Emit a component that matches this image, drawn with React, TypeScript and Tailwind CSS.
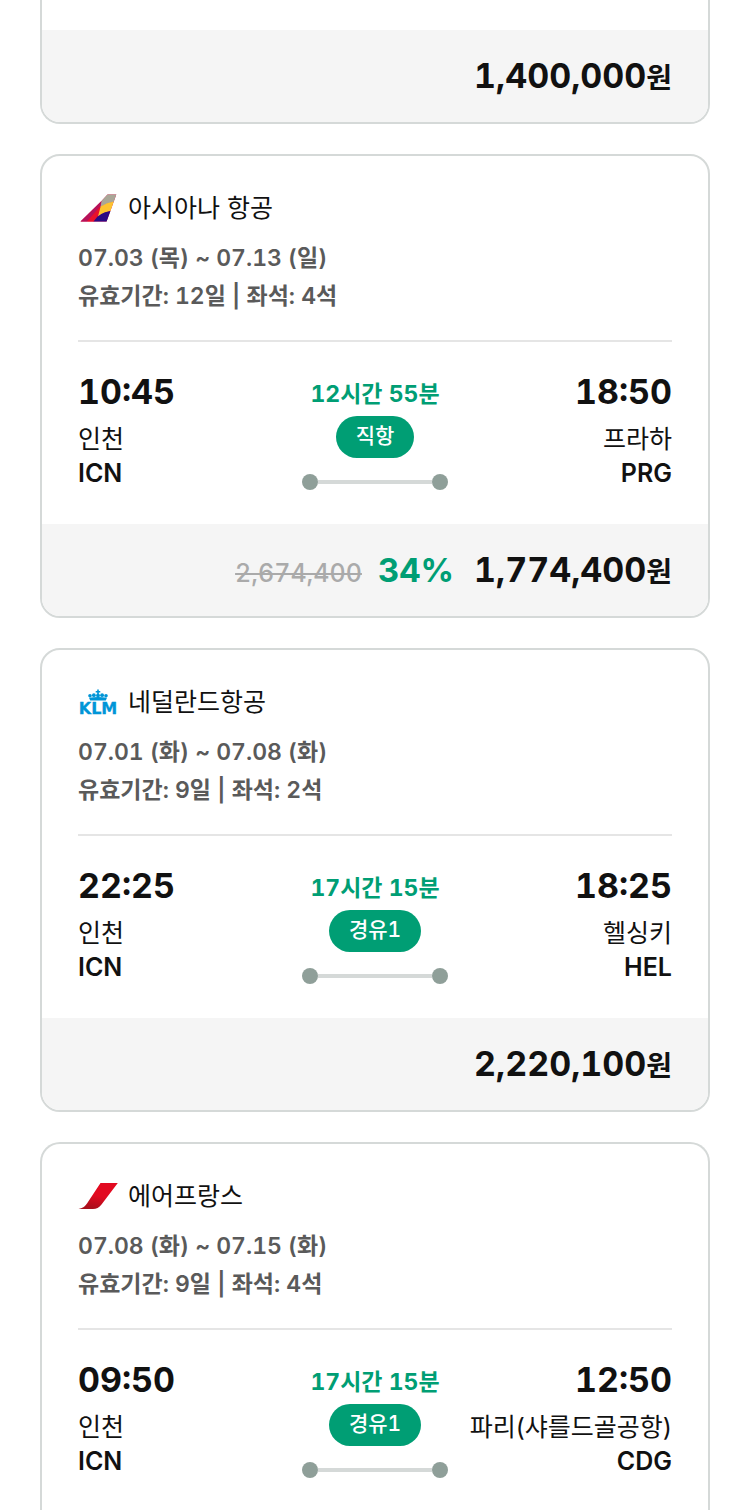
import type { ReactNode } from "react";

type Flight = {
  airline: string;
  logo: ReactNode;
  dates: string;
  info: string;
  departTime: string;
  duration: string;
  stops: string;
  arriveTime: string;
  arriveCity: string;
  arriveCode: string;
  price?: string;
  original?: string;
  discount?: string;
};

const AsianaLogo = () => (
  <svg viewBox="0 0 40 30" className="w-10 h-[30px]" aria-hidden="true">
    <path d="M2.5 27.4 L23.5 7 L29.500 0.500 H38.300 L28.600 27.400 Z" fill="#d9003f" />
    <path d="M2.5 27.4 L23.5 7 L22.500 13 L9 27.4 Z" fill="#b5125a" />
    <path d="M9 27.4 L22.500 12 L21 20 L16 27.4 Z" fill="#e8102b" />
    <path d="M23.5 7 L29.500 0.500 H38.300 L35.700 7.800 Q29 9.500 22.500 13 Z" fill="#a9a797" />
    <path d="M22.600 12.500 Q29 8.500 35.800 7.400 L32.400 17 Q26 18 20 22.500 Z" fill="#fdc42f" />
    <path d="M32.400 17 L28.600 27.400 H15.500 Q21 18.500 32.400 17 Z" fill="#2b0a83" />
  </svg>
);

const KlmLogo = () => (
  <svg viewBox="0 0 40 30" className="w-10 h-[30px]" fill="#0095d7" aria-hidden="true">
    <path d="M19.200 1.500h1.600v1.500h1.500v1.500h-1.500v1.600h-1.600V4.500h-1.500V3h1.500z" />
    <circle cx="20" cy="7.400" r="1.900" />
    <circle cx="15.900" cy="7.200" r="1.900" />
    <circle cx="24.100" cy="7.200" r="1.900" />
    <circle cx="12" cy="7.700" r="1.800" />
    <circle cx="28" cy="7.700" r="1.800" />
    <path d="M11 9.800 Q20 8.300 29 9.800 L27.800 12.500 H12.200 Z" />
    <text
      x="20"
      y="26"
      textAnchor="middle"
      stroke="#0095d7"
      strokeWidth="0.300"
      className="font-['DejaVu_Sans',sans-serif] text-[16px] font-bold"
    >
      KLM
    </text>
  </svg>
);

const AirFranceLogo = () => (
  <svg viewBox="0 0 40 30" className="w-10 h-[30px]" aria-hidden="true">
    <defs>
      <linearGradient id="afTail" x1="0.700" y1="0" x2="0.400" y2="1">
        <stop offset="0.500" stopColor="#e20a20" />
        <stop offset="1" stopColor="#a80f1c" />
      </linearGradient>
    </defs>
    <path d="M22.500 1 H39.800 L23.500 22.500 Q20 27 15 27 H0.500 Q6 26 9 21.500 Z" fill="url(#afTail)" />
  </svg>
);

const flights: Flight[] = [
  {
    airline: "아시아나 항공",
    logo: <AsianaLogo />,
    dates: "07.03 (목) ~ 07.13 (일)",
    info: "유효기간: 12일 | 좌석: 4석",
    departTime: "10:45",
    duration: "12시간 55분",
    stops: "직항",
    arriveTime: "18:50",
    arriveCity: "프라하",
    arriveCode: "PRG",
    price: "1,774,400",
    original: "2,674,400",
    discount: "34%",
  },
  {
    airline: "네덜란드항공",
    logo: <KlmLogo />,
    dates: "07.01 (화) ~ 07.08 (화)",
    info: "유효기간: 9일 | 좌석: 2석",
    departTime: "22:25",
    duration: "17시간 15분",
    stops: "경유1",
    arriveTime: "18:25",
    arriveCity: "헬싱키",
    arriveCode: "HEL",
    price: "2,220,100",
  },
  {
    airline: "에어프랑스",
    logo: <AirFranceLogo />,
    dates: "07.08 (화) ~ 07.15 (화)",
    info: "유효기간: 9일 | 좌석: 4석",
    departTime: "09:50",
    duration: "17시간 15분",
    stops: "경유1",
    arriveTime: "12:50",
    arriveCity: "파리(샤를드골공항)",
    arriveCode: "CDG",
  },
];

function PriceBar({ price, original, discount }: { price: string; original?: string; discount?: string }) {
  return (
    <div className="bg-[#f5f5f5] px-9 py-5 tabular-nums">
      <div className="flex items-baseline justify-end">
        {original && <del className="mr-4 text-[25px] leading-none font-medium text-[#aaa]">{original}</del>}
        {discount && <span className="mr-5 text-[33px] leading-none font-bold text-[#009e74]">{discount}</span>}
        <strong className="text-[34px] leading-[52px] font-bold">
          {price}
          <span className="text-[28px] leading-none">원</span>
        </strong>
      </div>
    </div>
  );
}

function Endpoint({ time, city, code, end }: { time: string; city: string; code: string; end?: boolean }) {
  return (
    <div className={end ? "flex-1 text-right" : "flex-1"}>
      <p className="text-[34px] leading-[44px] font-bold tabular-nums">{time}</p>
      <p className="mt-2 text-[25px] leading-[34px] whitespace-nowrap">{city}</p>
      <p className="text-[25px] leading-[34px] font-semibold">{code}</p>
    </div>
  );
}

function FlightCard({ flight }: { flight: Flight }) {
  const frame = flight.price ? "rounded-[20px] border-2" : "rounded-t-[20px] border-2 border-b-0";
  return (
    <article className={`overflow-hidden border-[#d5d9d8] bg-white ${frame}`}>
      <div className="px-9 pt-[34px] pb-[34px]">
        <header className="border-b-2 border-[#e5e5e5] pb-[25px]">
          <div className="flex h-[38px] items-center gap-[10px]">
            {flight.logo}
            <h2 className="text-[25px]">{flight.airline}</h2>
          </div>
          <div className="mt-[11px] text-[23px] leading-[38px] font-semibold text-[#5a5a5a] tabular-nums">
            <p>{flight.dates}</p>
            <p>{flight.info}</p>
          </div>
        </header>
        <div className="flex items-end pt-7">
          <Endpoint time={flight.departTime} city="인천" code="ICN" />
          <div className="flex w-[146px] flex-col items-center">
            <p className="text-[23px] leading-8 font-bold whitespace-nowrap text-[#009e74] tabular-nums">
              {flight.duration}
            </p>
            <span className="mt-[6px] flex h-[42px] items-center rounded-full bg-[#009e74] px-5 pb-[2px] text-[21px] font-medium text-white tabular-nums">
              {flight.stops}
            </span>
            <div className="mt-4 flex w-full items-center">
              <span className="size-4 rounded-full bg-[#8f9f99]" />
              <span className="h-1 flex-1 bg-[#d5d9d8]" />
              <span className="size-4 rounded-full bg-[#8f9f99]" />
            </div>
          </div>
          <Endpoint time={flight.arriveTime} city={flight.arriveCity} code={flight.arriveCode} end />
        </div>
      </div>
      {flight.price && <PriceBar price={flight.price} original={flight.original} discount={flight.discount} />}
    </article>
  );
}

export default function App() {
  return (
    <main
      lang="ko"
      className="flex h-screen flex-col gap-[30px] overflow-hidden bg-white px-10 font-['Inter','Noto_Sans_CJK_KR',sans-serif] text-[#111] *:shrink-0"
    >
      <article className="overflow-hidden rounded-b-[20px] border-2 border-t-0 border-[#d5d9d8] pt-[30px]">
        <PriceBar price="1,400,000" />
      </article>
      {flights.map((flight) => (
        <FlightCard key={flight.airline} flight={flight} />
      ))}
    </main>
  );
}
